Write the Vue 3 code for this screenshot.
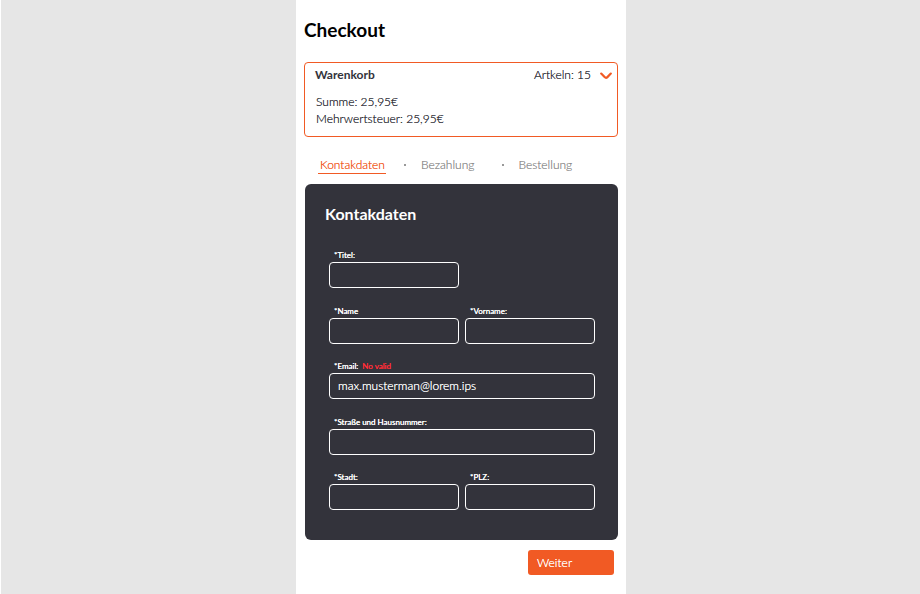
<script setup>
import { ref } from 'vue'

const steps = ['Kontakdaten', 'Bezahlung', 'Bestellung']
const active = ref(0)

const fields = ref([
  { id: 'titel', label: '*Titel:', value: '', size: 'alone' },
  { id: 'name', label: '*Name', value: '', size: 'half' },
  { id: 'vorname', label: '*Vorname:', value: '', size: 'half' },
  { id: 'email', label: '*Email:', value: 'max.musterman@lorem.ips', size: 'full', error: 'No valid' },
  { id: 'strasse', label: '*Straße und Hausnummer:', value: '', size: 'full' },
  { id: 'stadt', label: '*Stadt:', value: '', size: 'half' },
  { id: 'plz', label: '*PLZ:', value: '', size: 'half' }
])
</script>

<template>
  <div class="page">
    <main class="checkout">
      <h1>Checkout</h1>

      <section class="cart">
        <header class="cart-head">
          <h2>Warenkorb</h2>
          <span class="count">Artkeln: 15</span>
          <button class="toggle" type="button" aria-label="Warenkorb">
            <svg viewBox="0 0 12 8" width="12" height="8">
              <path d="M1.2 1.6 L4.6 5.1 Q6 6.5 7.4 5.1 L10.8 1.6" fill="none" stroke="#f15a24" stroke-width="2.2" stroke-linecap="round" stroke-linejoin="round" />
            </svg>
          </button>
        </header>
        <p>Summe: 25,95€</p>
        <p>Mehrwertsteuer: 25,95€</p>
      </section>

      <nav class="steps">
        <template v-for="(step, i) in steps" :key="step">
          <span v-if="i" class="dot"></span>
          <a href="#" :class="{ active: i === active }" @click.prevent="active = i">{{ step }}</a>
        </template>
      </nav>

      <form id="contact" class="panel" @submit.prevent>
        <h2>Kontakdaten</h2>
        <div class="fields">
          <div v-for="f in fields" :key="f.id" class="field" :class="f.size">
            <div class="caption">
              <label :for="f.id">{{ f.label }}</label>
              <span v-if="f.error" class="error">{{ f.error }}</span>
            </div>
            <input :id="f.id" v-model="f.value" type="text" />
          </div>
        </div>
      </form>

      <button class="next" type="submit" form="contact">Weiter</button>
    </main>
  </div>
</template>

<style>
body {
  margin: 0;
}
</style>

<style scoped>
* {
  box-sizing: border-box;
}

.page {
  min-height: 100vh;
  display: flex;
  justify-content: center;
  padding-left: 1px;
  border-left: 1px solid #fff;
  background: #e6e6e6;
  color: #33333b;
  font-family: Lato, sans-serif;
  font-size: 12px;
  font-weight: 300;
  line-height: 17px;
}

.checkout {
  width: 100%;
  max-width: 330px;
  padding: 18px 8px 19px;
  display: flex;
  flex-direction: column;
  background: #fff;
}

h1,
h2,
p {
  margin: 0;
}

h1 {
  margin-bottom: 20px;
  color: #000;
  font-size: 19px;
  font-weight: 700;
  line-height: 24px;
}

.cart {
  padding: 3px 5px 9px 10px;
  border: 1px solid #f15a24;
  border-radius: 4px;
}

.cart-head {
  display: flex;
  align-items: center;
  margin-bottom: 10px;
}

.cart-head h2 {
  flex: 1;
  font-size: 12px;
  font-weight: 700;
}

.count,
.cart p,
.steps a,
.caption,
input,
.next {
  text-shadow: 0 0 currentColor;
}

.toggle {
  display: flex;
  margin-left: 9px;
  padding: 2px 0 0;
  border: 0;
  background: none;
}

.cart p {
  padding-left: 1px;
}

.steps {
  display: flex;
  align-items: center;
  margin-top: 19px;
  padding-left: 14px;
}

.steps a {
  padding: 0 1px 0 2px;
  border-bottom: 1px solid transparent;
  color: #909090;
  text-decoration: none;
}

.steps .active {
  border-color: #f15a24;
  color: #f15a24;
}

.dot {
  width: 2px;
  height: 2px;
  margin: 0 13px 0 18px;
  background: #999;
}

.dot:nth-of-type(2) {
  margin: 0 12px 0 27px;
}

.panel {
  min-height: 356px;
  margin: 10px 0 10px 1px;
  padding: 20px 23px 30px 24px;
  display: flex;
  flex-direction: column;
  border-radius: 6px;
  background: #33333b;
  color: #fff;
}

.panel h2 {
  margin: 0 -4px 24px;
  font-size: 16px;
  font-weight: 700;
  line-height: 20px;
}

.fields {
  flex: 1;
  display: grid;
  grid-template-columns: 1fr 1fr;
  column-gap: 6px;
  align-content: space-between;
}

.alone,
.alone + .field {
  grid-column: 1 / 2;
}

.full {
  grid-column: 1 / 3;
}

.caption {
  display: flex;
  gap: 4px;
  padding-left: 5px;
  font-size: 8px;
  font-weight: 400;
  line-height: 14px;
}

.error {
  color: #ff2d37;
}

input {
  display: block;
  width: 100%;
  height: 26px;
  padding: 0 8px 2px;
  border: 1px solid #fff;
  border-radius: 4px;
  background: transparent;
  color: #fff;
  font: inherit;
}

.next {
  align-self: flex-end;
  width: 86px;
  height: 25px;
  margin-right: 4px;
  padding: 0 9px;
  border: 0;
  border-radius: 3px;
  background: #f15a24;
  color: #fff;
  font: inherit;
  text-align: left;
}
</style>
